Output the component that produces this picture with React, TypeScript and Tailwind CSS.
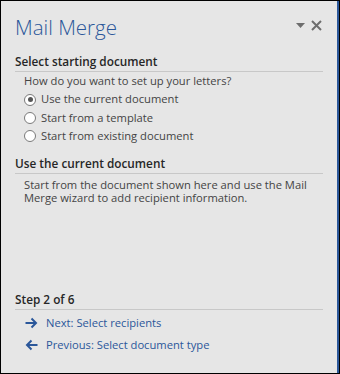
export default function App() {
  return (
    <div className="h-[374px] w-[340px] border border-black bg-[#e6e6e6] text-[#444444]" style={{ fontFamily: '"Open Sans", "Noto Sans", sans-serif' }}>
      <div className="flex h-full flex-col border-r-2 border-r-[#2b579a] pl-[14px] pr-[14px]">
        <div className="flex items-start justify-between pt-[12px]">
          <h1 className="text-[20.5px] font-light leading-[28px] text-[#2b579a]">Mail Merge</h1>
          <div className="mt-[7px] flex items-center gap-[6px] pr-[1px] text-[#6d6d6d]">
            <svg width="9" height="5" viewBox="0 0 9 5"><path d="M0 0h9L4.5 5z" fill="currentColor" /></svg>
            <svg width="11" height="11" viewBox="0 0 11 11"><path d="M1 1l9 9M10 1l-9 9" stroke="currentColor" strokeWidth="2" /></svg>
          </div>
        </div>

        <Heading className="mt-[12px]">Select starting document</Heading>
        <div className="pl-[9px] text-[11.2px] leading-[18.4px]">
          <p>How do you want to set up your letters?</p>
          <Radio checked label="Use the current document" />
          <Radio label="Start from a template" />
          <Radio label="Start from existing document" />
        </div>

        <Heading className="mt-[9px]">Use the current document</Heading>
        <p className="pl-[9px] pt-[4px] text-[11.2px] leading-[13px]">
          Start from the document shown here and use the Mail Merge wizard to add recipient information.
        </p>

        <div className="flex-1" />

        <Heading>Step 2 of 6</Heading>
        <div className="pb-[17px] pl-[10px] pt-[2px] text-[11.2px] leading-[22px] text-[#2b579a]">
          <div className="flex items-center gap-[8px]">
            <svg width="13" height="12" viewBox="0 0 13 12"><path d="M0.5 6h10.5M6.5 1.5L11 6l-4.5 4.5" fill="none" stroke="#2b579a" strokeWidth="2" /></svg>
            <span>Next: Select recipients</span>
          </div>
          <div className="flex items-center gap-[8px]">
            <svg width="13" height="12" viewBox="0 0 13 12"><path d="M12.5 6H2M6.5 1.5L2 6l4.5 4.5" fill="none" stroke="#2b579a" strokeWidth="2" /></svg>
            <span>Previous: Select document type</span>
          </div>
        </div>
      </div>
    </div>
  );
}

function Heading({ children, className = "" }: { children: string; className?: string }) {
  return (
    <div className={`border-b border-[#c8c8c8] pb-[1px] text-[11.8px] font-semibold leading-[17px] text-[#262626] ${className}`}>
      {children}
    </div>
  );
}

function Radio({ label, checked = false }: { label: string; checked?: boolean }) {
  return (
    <div className="flex items-center gap-[5px]">
      <span className="flex h-[12px] w-[12px] items-center justify-center rounded-full border border-[#7a7a7a] bg-white">
        {checked && <span className="h-[5px] w-[5px] rounded-full bg-[#555555]" />}
      </span>
      <span>{label}</span>
    </div>
  );
}
